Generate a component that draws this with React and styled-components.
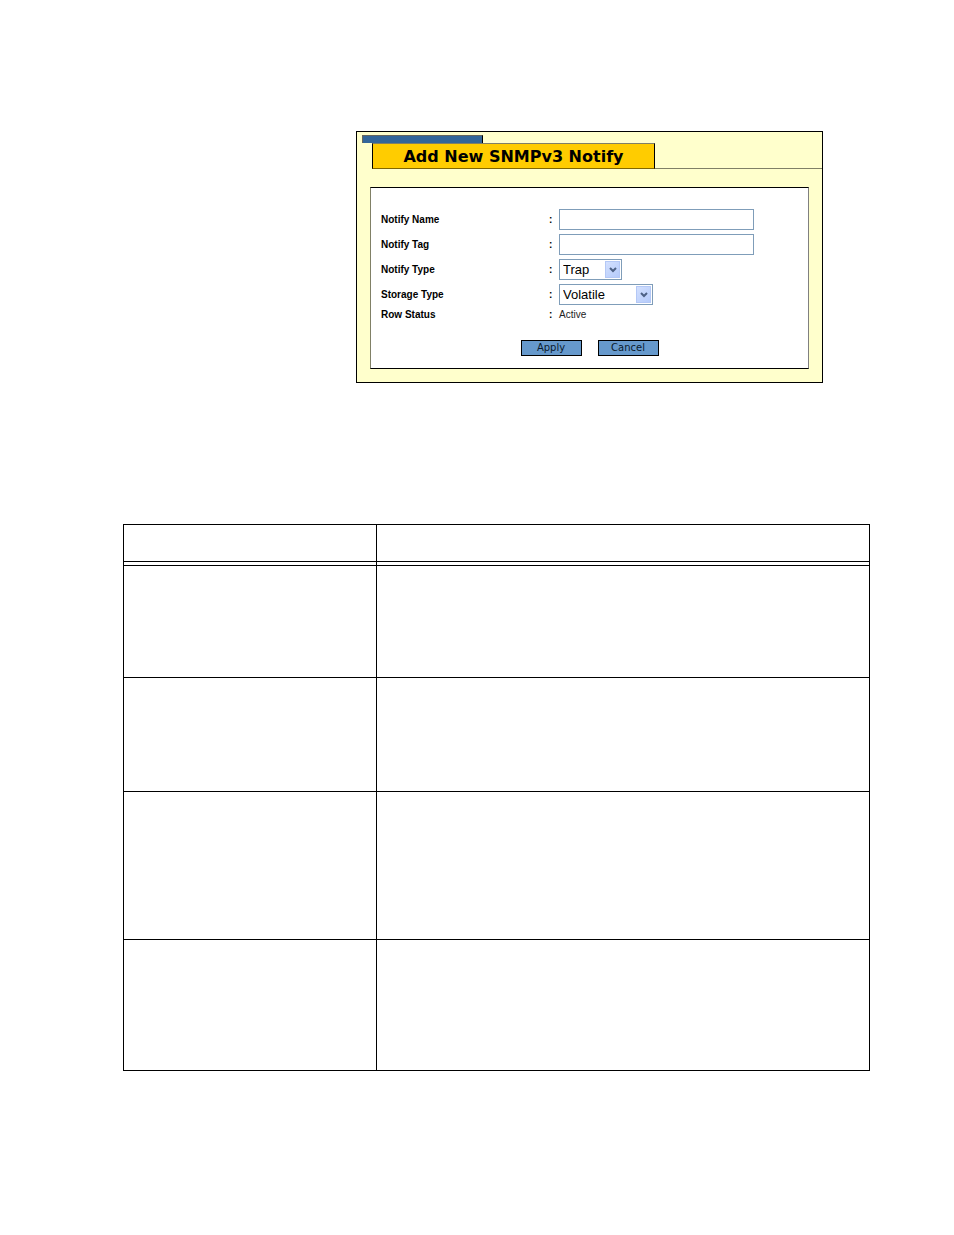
import React, { useState } from 'react';
import styled, { createGlobalStyle } from 'styled-components';

const rows = [
  { id: 'name', height: 112 },
  { id: 'tag', height: 114 },
  { id: 'type', height: 148 },
  { id: 'storage', height: 131 },
];

function Dropdown({ id, value, onChange, options, $width }) {
  return (
    <SelectBox $width={$width}>
      <Select id={id} value={value} onChange={(e) => onChange(e.target.value)}>
        {options.map((option) => (
          <option key={option}>{option}</option>
        ))}
      </Select>
      <Arrow>
        <svg width="8" height="6" viewBox="0 0 8 6" aria-hidden="true">
          <path d="M1 1l3 3 3-3" fill="none" stroke="#4d6185" strokeWidth="2" />
        </svg>
      </Arrow>
    </SelectBox>
  );
}

function App() {
  const [name, setName] = useState('');
  const [tag, setTag] = useState('');
  const [type, setType] = useState('Trap');
  const [storage, setStorage] = useState('Volatile');

  return (
    <Page>
      <GlobalStyle />
      <Panel>
        <TopBar />
        <TitleRow>
          <Title>Add New SNMPv3 Notify</Title>
          <TitleRule />
        </TitleRow>
        <Form onSubmit={(e) => e.preventDefault()}>
          <Fields>
            <Label htmlFor="name">Notify Name</Label>
            <Colon>:</Colon>
            <Input id="name" value={name} onChange={(e) => setName(e.target.value)} />
            <Label htmlFor="tag">Notify Tag</Label>
            <Colon>:</Colon>
            <Input id="tag" value={tag} onChange={(e) => setTag(e.target.value)} />
            <Label htmlFor="type">Notify Type</Label>
            <Colon>:</Colon>
            <Dropdown
              id="type"
              value={type}
              onChange={setType}
              options={['Trap', 'Inform']}
              $width="63px"
            />
            <Label htmlFor="storage">Storage Type</Label>
            <Colon>:</Colon>
            <Dropdown
              id="storage"
              value={storage}
              onChange={setStorage}
              options={['Volatile', 'NonVolatile']}
              $width="94px"
            />
            <Label as="span">Row Status</Label>
            <Colon>:</Colon>
            <Status>Active</Status>
          </Fields>
          <Actions>
            <Button type="submit">Apply</Button>
            <Button type="button">Cancel</Button>
          </Actions>
        </Form>
      </Panel>
      <Table>
        <thead>
          <tr>
            <HeadCell $width="253px" />
            <HeadCell />
          </tr>
        </thead>
        <tbody>
          {rows.map((row) => (
            <Row key={row.id} $height={row.height}>
              <Cell />
              <Cell />
            </Row>
          ))}
        </tbody>
      </Table>
    </Page>
  );
}

const GlobalStyle = createGlobalStyle`
  * {
    box-sizing: border-box;
  }
  body {
    margin: 0;
    background: #fff;
    color: #000;
    font-family: 'Liberation Sans', Arial, sans-serif;
    font-size: 10px;
    line-height: 12px;
  }
`;

const Page = styled.main`
  padding: 131px 84px 164px 123px;
`;

const Panel = styled.section`
  margin: 0 47px 0 233px;
  padding: 3px 0 13px;
  border: 1px solid #000;
  background: #ffffcc;
`;

const TopBar = styled.div`
  width: 121px;
  height: 8px;
  margin-left: 5px;
  border: 1px solid #000;
  border-top-color: #66665c;
  border-left-color: #66665c;
  border-bottom: 0;
  background: #336699;
`;

const TitleRow = styled.div`
  display: flex;
  margin-left: 15px;
`;

const Title = styled.h1`
  width: 283px;
  height: 26px;
  margin: 0;
  border: 1px solid #000;
  border-top-color: #807f66;
  border-bottom-color: #806600;
  background: #ffcc00;
  font-family: Verdana, 'DejaVu Sans', sans-serif;
  font-size: 16px;
  line-height: 26px;
  text-align: center;
`;

const TitleRule = styled.div`
  flex: 1;
  border-bottom: 1px solid #808066;
`;

const Form = styled.form`
  margin: 18px 13px 0;
  padding: 21px 10px 12px;
  border: 1px solid #000;
  border-left-color: #808066;
  border-right-color: #808080;
  background: #fff;
`;

const Fields = styled.div`
  display: grid;
  grid-template-columns: 168px 10px 1fr;
  align-items: center;
  row-gap: 4px;
`;

const Label = styled.label`
  font-weight: bold;
`;

const Colon = styled.span`
  font-weight: bold;
`;

const Status = styled.span`
  color: #222;
`;

const Input = styled.input`
  width: 195px;
  height: 21px;
  padding: 0 4px;
  border: 1px solid #7f9db9;
  border-radius: 0;
  background: #fff;
  font: inherit;
`;

const SelectBox = styled.div`
  position: relative;
  width: ${(props) => props.$width};
  height: 21px;
`;

const Select = styled.select`
  display: block;
  width: 100%;
  height: 100%;
  padding: 0 18px 0 3px;
  appearance: none;
  border: 1px solid #7f9db9;
  border-radius: 0;
  background: #fff;
  color: #000;
  font-family: inherit;
  font-size: 13px;
`;

const Arrow = styled.span`
  position: absolute;
  top: 2px;
  right: 2px;
  bottom: 2px;
  width: 15px;
  display: flex;
  align-items: center;
  justify-content: center;
  border: 1px solid #b4c8f6;
  background: linear-gradient(135deg, #d3e0fe, #b5cbfb);
  pointer-events: none;
`;

const Actions = styled.div`
  display: flex;
  justify-content: center;
  gap: 16px;
  margin-top: 19px;
`;

const Button = styled.button`
  width: 61px;
  height: 16px;
  padding: 0;
  border: 1px solid #000;
  border-radius: 0;
  background: #6699cc;
  color: #0a1a2c;
  font-family: Verdana, 'DejaVu Sans', sans-serif;
  font-size: 10px;
  line-height: 14px;
`;

const Table = styled.table`
  width: 100%;
  margin-top: 141px;
  border-collapse: collapse;
  table-layout: fixed;
`;

/* the inset shadow draws the upper line of the double rule */
const HeadCell = styled.th`
  width: ${(props) => props.$width || 'auto'};
  height: 41px;
  padding: 0;
  border: 1px solid #000;
  box-shadow: inset 0 -3px #fff, inset 0 -4px #000;
`;

const Row = styled.tr`
  height: ${(props) => props.$height}px;
`;

const Cell = styled.td`
  padding: 0;
  border: 1px solid #000;
`;

export default App;
